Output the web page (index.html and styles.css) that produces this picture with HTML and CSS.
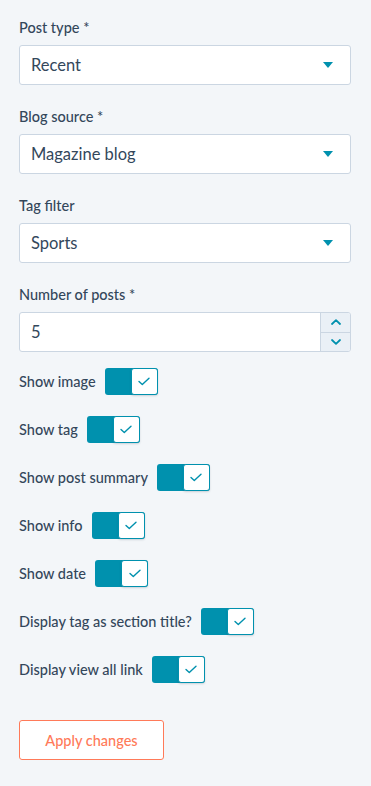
FILE: index.html
```html
<!DOCTYPE html>
<html>
<head>
<meta charset="utf-8">
<link rel="stylesheet" href="styles.css">
</head>
<body>
<div class="panel">
  <div class="field">
    <div class="label">Post type *</div>
    <div class="select"><span>Recent</span><span class="caret"></span></div>
  </div>
  <div class="field">
    <div class="label">Blog source *</div>
    <div class="select"><span>Magazine blog</span><span class="caret"></span></div>
  </div>
  <div class="field">
    <div class="label">Tag filter</div>
    <div class="select"><span>Sports</span><span class="caret"></span></div>
  </div>
  <div class="field field-last">
    <div class="label">Number of posts *</div>
    <div class="number">
      <span class="num-value">5</span>
      <div class="spinner">
        <div class="spin-btn"><svg width="10" height="6" viewBox="0 0 10 6"><path d="M1 5 L5 1.2 L9 5" fill="none" stroke="#0091ae" stroke-width="1.8" stroke-linecap="round" stroke-linejoin="round"/></svg></div>
        <div class="spin-btn"><svg width="10" height="6" viewBox="0 0 10 6"><path d="M1 1 L5 4.8 L9 1" fill="none" stroke="#0091ae" stroke-width="1.8" stroke-linecap="round" stroke-linejoin="round"/></svg></div>
      </div>
    </div>
  </div>

  <div class="toggles">
    <div class="toggle-row"><span class="tlabel">Show image</span><span class="toggle"><span class="knob"><svg width="12" height="9" viewBox="0 0 12 9"><path d="M1 4.5 L4.3 7.6 L11 1.2" fill="none" stroke="#0091ae" stroke-width="1.4" stroke-linecap="round" stroke-linejoin="round"/></svg></span></span></div>
    <div class="toggle-row"><span class="tlabel">Show tag</span><span class="toggle"><span class="knob"><svg width="12" height="9" viewBox="0 0 12 9"><path d="M1 4.5 L4.3 7.6 L11 1.2" fill="none" stroke="#0091ae" stroke-width="1.4" stroke-linecap="round" stroke-linejoin="round"/></svg></span></span></div>
    <div class="toggle-row"><span class="tlabel">Show post summary</span><span class="toggle"><span class="knob"><svg width="12" height="9" viewBox="0 0 12 9"><path d="M1 4.5 L4.3 7.6 L11 1.2" fill="none" stroke="#0091ae" stroke-width="1.4" stroke-linecap="round" stroke-linejoin="round"/></svg></span></span></div>
    <div class="toggle-row"><span class="tlabel">Show info</span><span class="toggle"><span class="knob"><svg width="12" height="9" viewBox="0 0 12 9"><path d="M1 4.5 L4.3 7.6 L11 1.2" fill="none" stroke="#0091ae" stroke-width="1.4" stroke-linecap="round" stroke-linejoin="round"/></svg></span></span></div>
    <div class="toggle-row"><span class="tlabel">Show date</span><span class="toggle"><span class="knob"><svg width="12" height="9" viewBox="0 0 12 9"><path d="M1 4.5 L4.3 7.6 L11 1.2" fill="none" stroke="#0091ae" stroke-width="1.4" stroke-linecap="round" stroke-linejoin="round"/></svg></span></span></div>
    <div class="toggle-row"><span class="tlabel">Display tag as section title?</span><span class="toggle"><span class="knob"><svg width="12" height="9" viewBox="0 0 12 9"><path d="M1 4.5 L4.3 7.6 L11 1.2" fill="none" stroke="#0091ae" stroke-width="1.4" stroke-linecap="round" stroke-linejoin="round"/></svg></span></span></div>
    <div class="toggle-row"><span class="tlabel">Display view all link</span><span class="toggle"><span class="knob"><svg width="12" height="9" viewBox="0 0 12 9"><path d="M1 4.5 L4.3 7.6 L11 1.2" fill="none" stroke="#0091ae" stroke-width="1.4" stroke-linecap="round" stroke-linejoin="round"/></svg></span></span></div>
  </div>

  <button class="apply">Apply changes</button>
</div>
</body>
</html>
```

FILE: styles.css
```css
* { box-sizing: border-box; }
html, body {
  margin: 0;
  padding: 0;
  background: #f3f6f9;
}
body {
  font-family: Lato, "Noto Sans", sans-serif;
  color: #33475b;
  width: 371px;
  height: 786px;
}
.panel {
  padding: 18px 20px 0 19px;
  display: flex;
  flex-direction: column;
}
.field {
  display: flex;
  flex-direction: column;
  margin-bottom: 22px;
}
.field-last { margin-bottom: 16px; }
.label {
  font-size: 14.5px;
  line-height: 20px;
  height: 20px;
  font-weight: 500;
  margin-bottom: 7px;
}
.select, .number {
  height: 40px;
  background: #fff;
  border: 1px solid #cbd6e2;
  border-radius: 3px;
  display: flex;
  align-items: center;
  font-size: 16.5px;
}
.select {
  justify-content: space-between;
  padding: 0 17px 0 11px;
}
.caret {
  width: 0;
  height: 0;
  border-left: 5.5px solid transparent;
  border-right: 5.5px solid transparent;
  border-top: 6px solid #0091ae;
}
.number {
  padding-left: 11px;
  justify-content: space-between;
  align-items: stretch;
}
.num-value {
  display: flex;
  align-items: center;
}
.spinner {
  width: 30px;
  display: flex;
  flex-direction: column;
  border-left: 1px solid #cbd6e2;
  background: #eaf0f6;
  border-radius: 0 2px 2px 0;
}
.spin-btn {
  flex: 1;
  display: flex;
  align-items: center;
  justify-content: center;
}
.spin-btn + .spin-btn { border-top: 1px solid #cbd6e2; }
.toggles {
  display: flex;
  flex-direction: column;
  gap: 21px;
}
.toggle-row {
  display: flex;
  align-items: center;
  gap: 9px;
  height: 27px;
}
.tlabel {
  font-size: 14.5px;
  font-weight: 500;
}
.toggle {
  width: 53px;
  height: 27px;
  background: #0091ae;
  border-radius: 3px;
  display: flex;
  justify-content: flex-end;
}
.knob {
  width: 27px;
  height: 27px;
  background: #fff;
  border: 1px solid #0091ae;
  border-radius: 3px;
  box-shadow: 0 1px 2px rgba(45, 62, 80, 0.2);
  display: flex;
  align-items: center;
  justify-content: center;
}
.apply {
  margin-top: 37px;
  width: 145px;
  height: 40px;
  background: #fff;
  border: 1px solid #ff7a59;
  border-radius: 3px;
  color: #ff7a59;
  font-family: Lato, "Noto Sans", sans-serif;
  font-size: 14.5px;
  font-weight: 500;
  padding: 0;
}
```
